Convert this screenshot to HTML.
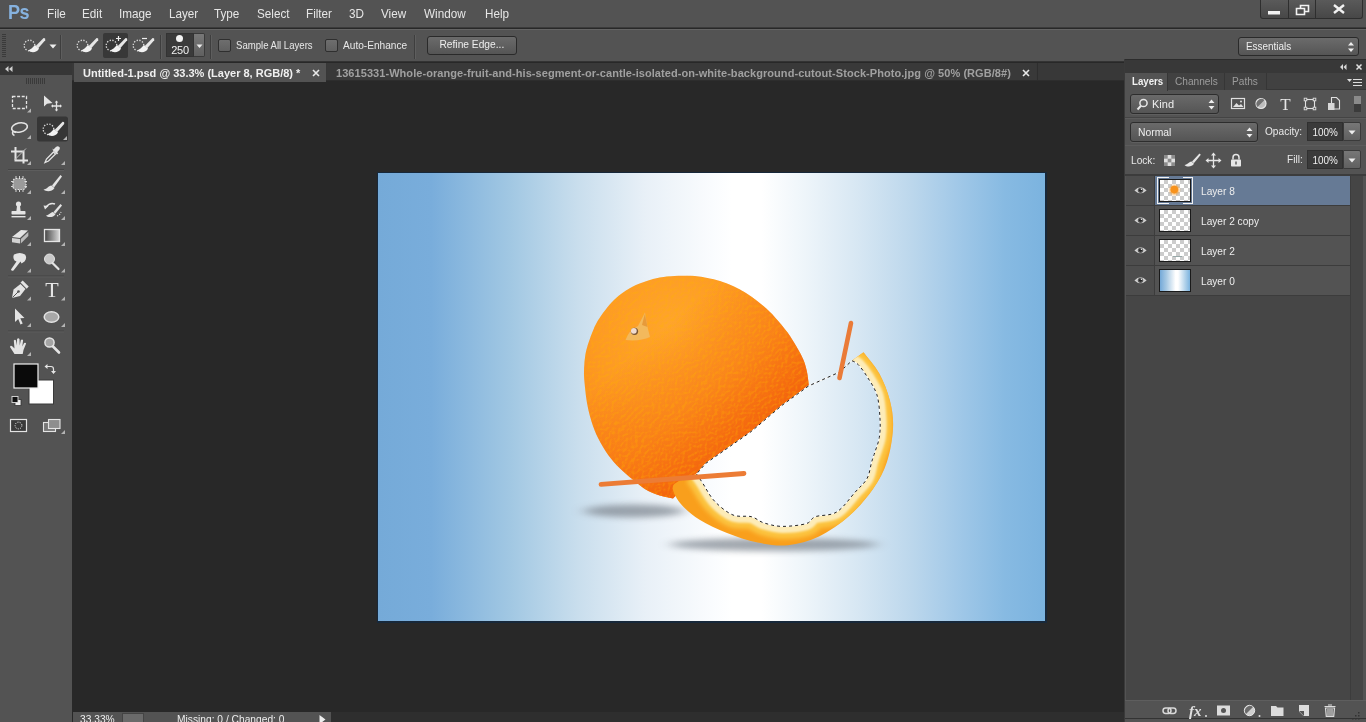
<!DOCTYPE html>
<html><head><meta charset="utf-8">
<style>
*{box-sizing:border-box;margin:0;padding:0}
html,body{width:1366px;height:722px;overflow:hidden;background:#282828;font-family:"Liberation Sans",sans-serif;color:#e0e0e0;font-size:12px}
.abs{position:absolute}
#menubar{left:0;top:0;width:1366px;height:28px;background:#535353;border-bottom:1px solid #3b3b3b}
#menubar .mi{position:absolute;top:6px;font-size:13px;color:#e6e6e6;transform:scaleX(0.9);transform-origin:0 0;white-space:nowrap}
#ps{position:absolute;left:8px;top:0px;font-size:21px;font-weight:bold;color:#86b2df;letter-spacing:-0.5px;transform:scaleX(0.86);transform-origin:0 0}
#opts{left:0;top:29px;width:1366px;height:33px;background:#535353;border-top:1px solid #646464;border-bottom:1px solid #333}
#tabbar{left:72px;top:63px;width:1052px;height:18px;background:#383838;border-bottom:1px solid #2d2d2d}
.tab{position:absolute;top:0;height:19px;font-size:11px;font-weight:bold;line-height:21px;white-space:nowrap;overflow:hidden}
#tools{left:0;top:63px;width:72px;height:659px;background:#535353}
#canvas{left:73px;top:82px;width:1052px;height:630px;background:#282828}
#status{left:73px;top:712px;width:258px;height:10px;background:#535353}

#winctl{left:1260px;top:0;width:103px;height:19px;border:1px solid #2e2e2e;border-top:none;background:linear-gradient(#5a5a5a,#474747);border-radius:0 0 3px 3px}
#winctl i{position:absolute;top:0;width:1px;height:18px;background:#2e2e2e}
.sep{position:absolute;top:5px;width:2px;height:24px;border-left:1px solid #3e3e3e;border-right:1px solid #5e5e5e}
.cb{position:absolute;top:9px;width:13px;height:13px;background:linear-gradient(#6e6e6e,#606060);border:1px solid #2f2f2f;border-radius:2px}
.ot{position:absolute;top:9px;font-size:11px;color:#e8e8e8;white-space:nowrap;transform:scaleX(0.92);transform-origin:0 0}
.btn{position:absolute;border:1px solid #2a2a2a;border-radius:3px;background:linear-gradient(#6b6b6b,#555);font-size:11px;color:#eee;text-align:center}

#rpanel{left:1124px;top:59px;width:242px;height:663px;background:#535353;border-left:1px solid #3a3a3a}
#rpanel .hd{position:absolute;left:0;top:0;width:241px;height:14px;background:#383838;border-top:1px solid #2c2c2c}
.ptab{position:absolute;top:14px;height:17px;font-size:11px;line-height:16px;padding-left:7px;color:#9c9c9c;background:#414141;border-right:1px solid #363636;white-space:nowrap}
.ptab span,.lt span,.pl span{display:inline-block;transform:scaleX(0.92);transform-origin:0 50%}
.dd{position:absolute;height:20px;border:1px solid #2d2d2d;border-radius:3px;background:linear-gradient(#6a6a6a,#555);font-size:11px;line-height:18px;color:#eee;box-shadow:0 1px 0 #5f5f5f}
.pl{position:absolute;font-size:11px;color:#e8e8e8;white-space:nowrap}
.fld{position:absolute;width:36px;height:19px;background:#3a3a3a;border:1px solid #303030;font-size:11px;line-height:18px;text-align:center;color:#f0f0f0}
.fbtn{position:absolute;width:18px;height:19px;background:linear-gradient(#777,#606060);border:1px solid #3a3a3a;border-radius:0 2px 2px 0}
.lrow{position:absolute;left:1px;width:224px;height:30px;border-bottom:1px solid #3c3c3c;background:#535353}
.lrow .eye{position:absolute;left:0;top:0;width:29px;height:29px;background:#4d4d4d;border-right:1px solid #3c3c3c}
.lrow .th{position:absolute;left:33px;top:3px;width:32px;height:23px;border:1px solid #1a1a1a}
.lt{position:absolute;left:75px;top:9px;font-size:11px;color:#eee;white-space:nowrap}
.chk{background-color:#fff;background-image:linear-gradient(45deg,#ccc 25%,transparent 25%,transparent 75%,#ccc 75%),linear-gradient(45deg,#ccc 25%,transparent 25%,transparent 75%,#ccc 75%);background-size:8px 8px;background-position:0 0,4px 4px}
</style></head><body><div id="wrap" style="position:absolute;left:0;top:0;width:1366px;height:722px;will-change:transform">
<svg width="0" height="0" style="position:absolute"><defs>
<g id="qs"><circle cx="7.5" cy="10.5" r="5.3" fill="none" stroke="#dcdcdc" stroke-width="1.3" stroke-dasharray="1.3 1.5"/><path d="M21.6,3 L13.8,11 L16.2,13.3 L23.2,5.2 Q23.8,2.8 21.6,3 Z" fill="#e6e6e6"/><path d="M13.6,10.6 C10.600,11.200 10.400,14.300 6.200,15.200 C9,18.200 15,17.800 17,13.400 Z" fill="#f2f2f2"/></g>
</defs></svg>
<div id="menubar" class="abs">
 <div id="ps">Ps</div>
 <div class="mi" style="left:47px">File</div>
 <div class="mi" style="left:82px">Edit</div>
 <div class="mi" style="left:119px">Image</div>
 <div class="mi" style="left:169px">Layer</div>
 <div class="mi" style="left:214px">Type</div>
 <div class="mi" style="left:257px">Select</div>
 <div class="mi" style="left:306px">Filter</div>
 <div class="mi" style="left:349px">3D</div>
 <div class="mi" style="left:381px">View</div>
 <div class="mi" style="left:424px">Window</div>
 <div class="mi" style="left:485px">Help</div>
</div>
<div id="winctl" class="abs"><i style="left:27px"></i><i style="left:54px"></i>
<svg class="abs" style="left:0;top:0" width="103" height="18"><rect x="7" y="11" width="12" height="3.5" fill="#f2f2f2"/><path d="M39.5,5.5 h8 v6 h-8 z" fill="none" stroke="#f2f2f2" stroke-width="1.6"/><path d="M35.5,8.5 h8 v6 h-8 z" fill="#4d4d4d" stroke="#f2f2f2" stroke-width="1.6"/><path d="M73,5 L83,13 M83,5 L73,13" stroke="#f2f2f2" stroke-width="2.4"/></svg></div>
<div id="opts" class="abs">
 <svg class="abs" style="left:2px;top:4px" width="5" height="24"><g fill="#3a3a3a"><rect x="0" y="0" width="4" height="1"/><rect x="0" y="2" width="4" height="1"/><rect x="0" y="4" width="4" height="1"/><rect x="0" y="6" width="4" height="1"/><rect x="0" y="8" width="4" height="1"/><rect x="0" y="10" width="4" height="1"/><rect x="0" y="12" width="4" height="1"/><rect x="0" y="14" width="4" height="1"/><rect x="0" y="16" width="4" height="1"/><rect x="0" y="18" width="4" height="1"/><rect x="0" y="20" width="4" height="1"/><rect x="0" y="22" width="4" height="1"/></g></svg>
 <svg class="abs" style="left:22px;top:5px" width="24" height="22" viewBox="0 0 24 22"><use href="#qs"/></svg>
 <svg class="abs" style="left:49px;top:14px" width="8" height="5"><path d="M0.5,0.5 L7.5,0.5 L4,4.5 Z" fill="#eee"/></svg>
 <div class="sep" style="left:60px"></div>
 <svg class="abs" style="left:75px;top:5px" width="24" height="22" viewBox="0 0 24 22"><use href="#qs"/></svg>
 <div class="abs" style="left:103px;top:3px;width:25px;height:25px;background:#383838;border-radius:2px"></div>
 <svg class="abs" style="left:104px;top:5px" width="24" height="22" viewBox="0 0 24 22"><use href="#qs"/><path d="M12,3.5 h5 M14.5,1 v5" stroke="#eee" stroke-width="1.2"/></svg>
 <svg class="abs" style="left:131px;top:5px" width="24" height="22" viewBox="0 0 24 22"><use href="#qs"/><path d="M11,3.5 h5" stroke="#eee" stroke-width="1.2"/></svg>
 <div class="sep" style="left:160px"></div>
 <div class="abs" style="left:166px;top:3px;width:28px;height:24px;background:#3a3a3a;border:1px solid #333"></div>
 <div class="abs" style="left:176px;top:5px;width:7px;height:7px;border-radius:50%;background:#f4f4f4"></div>
 <div class="abs" style="left:166px;top:14px;width:28px;text-align:center;font-size:11px;color:#f0f0f0;letter-spacing:-0.3px">250</div>
 <div class="abs" style="left:194px;top:3px;width:11px;height:24px;background:linear-gradient(#787878,#606060);border:1px solid #3a3a3a;border-left:none;border-radius:0 2px 2px 0"></div>
 <svg class="abs" style="left:196px;top:14px" width="8" height="5"><path d="M0.5,0.5 L6.5,0.5 L3.5,4 Z" fill="#eee"/></svg>
 <div class="sep" style="left:210px"></div>
 <div class="cb" style="left:218px"></div>
 <div class="ot" style="left:236px;transform:scaleX(0.87)">Sample All Layers</div>
 <div class="cb" style="left:325px"></div>
 <div class="ot" style="left:343px">Auto-Enhance</div>
 <div class="sep" style="left:414px"></div>
 <div class="btn" style="left:427px;top:6px;width:90px;height:19px;line-height:15px;"><span style="display:inline-block;transform:scaleX(0.93)">Refine Edge...</span></div>
 <div class="btn" style="left:1238px;top:7px;width:121px;height:19px;line-height:16px;text-align:left;padding-left:7px;"><span style="display:inline-block;transform:scaleX(0.9);transform-origin:0 50%">Essentials</span></div>
 <svg class="abs" style="left:1347px;top:11px" width="8" height="12"><path d="M1,4.5 L7,4.5 L4,1 Z M1,7.5 L7,7.5 L4,11 Z" fill="#eee"/></svg>
</div>
<div id="tabbar" class="abs">
 <div class="tab" style="left:2px;width:252px;background:#535353;color:#f0f0f0;padding-left:9px">Untitled-1.psd @ 33.3% (Layer 8, RGB/8) *</div>
 <div class="tab" style="left:255px;width:709px;height:17px;background:#393939;color:#a0a0a0;padding-left:9px;letter-spacing:0.06px">13615331-Whole-orange-fruit-and-his-segment-or-cantle-isolated-on-white-background-cutout-Stock-Photo.jpg @ 50% (RGB/8#)</div>
 <svg class="abs" style="left:240px;top:6px" width="8" height="8"><path d="M1,1 L7,7 M7,1 L1,7" stroke="#e8e8e8" stroke-width="1.6"/></svg>
 <svg class="abs" style="left:950px;top:6px" width="8" height="8"><path d="M1,1 L7,7 M7,1 L1,7" stroke="#e8e8e8" stroke-width="1.6"/></svg>
 <div class="abs" style="left:965px;top:0;width:1px;height:17px;background:#2e2e2e"></div>
</div>
<div id="tools" class="abs"></div>
<!--TOOLS--><svg class="abs" id="toolsvg" style="left:0;top:0" width="73" height="722" viewBox="0 0 73 722"><defs><linearGradient id="tg" x1="0" x2="1" y1="0" y2="0"><stop offset="0" stop-color="#444"/><stop offset="1" stop-color="#d8d8d8"/></linearGradient></defs><rect x="0" y="63" width="72" height="12" fill="#363636"/><path d="M8.5,66 L5,69 L8.5,72 Z M12.5,66 L9,69 L12.5,72 Z" fill="#d0d0d0"/><rect x="26" y="78" width="1" height="6" fill="#3a3a3a"/><rect x="28" y="78" width="1" height="6" fill="#3a3a3a"/><rect x="30" y="78" width="1" height="6" fill="#3a3a3a"/><rect x="32" y="78" width="1" height="6" fill="#3a3a3a"/><rect x="34" y="78" width="1" height="6" fill="#3a3a3a"/><rect x="36" y="78" width="1" height="6" fill="#3a3a3a"/><rect x="38" y="78" width="1" height="6" fill="#3a3a3a"/><rect x="40" y="78" width="1" height="6" fill="#3a3a3a"/><rect x="42" y="78" width="1" height="6" fill="#3a3a3a"/><rect x="44" y="78" width="1" height="6" fill="#3a3a3a"/><rect x="8" y="169.0" width="56" height="1" fill="#444"/><rect x="8" y="170.0" width="56" height="1" fill="#5d5d5d"/><rect x="8" y="275.5" width="56" height="1" fill="#444"/><rect x="8" y="276.5" width="56" height="1" fill="#5d5d5d"/><rect x="8" y="330.5" width="56" height="1" fill="#444"/><rect x="8" y="331.5" width="56" height="1" fill="#5d5d5d"/><rect x="12.5" y="96.5" width="14" height="12" fill="none" stroke="#e4e4e4" stroke-width="1.3" stroke-dasharray="3 1.6"/><path d="M31,108.5 L31,112.5 L27,112.5 Z" fill="#b4b4b4"/><path d="M44,95.5 L44,106.5 L47,103.7 L52.5,103.0 Z" fill="#e4e4e4"/><path d="M52.5,106.0 h8 M56.5,102.0 v8" stroke="#e4e4e4" stroke-width="1.3"/><path d="M56.5,100.5 l-1.8,2 h3.6 z M56.5,111.5 l-1.8,-2 h3.6 z M51,106.0 l2,-1.8 v3.6 z M62,106.0 l-2,-1.8 v3.6 z" fill="#e4e4e4"/><ellipse cx="19.5" cy="127.5" rx="8" ry="4.6" fill="none" stroke="#e4e4e4" stroke-width="1.6" transform="rotate(-12 19.5 127.5)"/><path d="M13,131 q-1.5,3 1.5,4.5 M13.5,131.5 l2.5,1" stroke="#e4e4e4" stroke-width="1.4" fill="none"/><path d="M31,135 L31,139 L27,139 Z" fill="#b4b4b4"/><rect x="37" y="116.5" width="31" height="25" rx="2.5" fill="#363636"/><g transform="translate(41,118.800)"><use href="#qs"/></g><path d="M67,136 L67,140 L63,140 Z" fill="#b4b4b4"/><path d="M15.5,147 v13.5 h12.5 M11,151.5 h12.5 v12" fill="none" stroke="#e4e4e4" stroke-width="2"/><path d="M14.5,160 L26,148.5" stroke="#bdbdbd" stroke-width="1"/><path d="M31,161 L31,165 L27,165 Z" fill="#b4b4b4"/><path d="M45,162.5 l1.5,-3.5 l7,-7 l2,2 l-7,7 z" fill="none" stroke="#e4e4e4" stroke-width="1.3"/><path d="M53,150.5 l4,4 l1.2,-1.2 l-1,-1 l2.3,-2.8 q1,-2.5 -1,-3 q-1,-0.6 -2.6,0.6 l-2.4,2.4 l-1,-1 z" fill="#e4e4e4"/><path d="M65,161 L65,165 L61,165 Z" fill="#b4b4b4"/><rect x="13" y="178.5" width="13" height="11" rx="3" fill="#9a9a9a" stroke="#e4e4e4" stroke-width="1.2" stroke-dasharray="1.4 1.4"/><path d="M11,181.5 h17 M11,186.5 h17 M16,176 v16 M19.5,176 v16 M23,176 v16" stroke="#e4e4e4" stroke-width="0.9" stroke-dasharray="2.5 11 2.5 20"/><path d="M31,190 L31,194 L27,194 Z" fill="#b4b4b4"/><path d="M60.5,175 L52,185.5 L54,187.5 L62,176.5 Z" fill="#e4e4e4"/><path d="M51.5,185.5 C48,186 47.5,189 43.5,189.5 C46,192 52,192 54.5,188 Z" fill="#e4e4e4"/><path d="M65,190 L65,194 L61,194 Z" fill="#b4b4b4"/><circle cx="18.5" cy="204" r="2.6" fill="#e4e4e4"/><path d="M17,206 h3 l0.6,5 h-4.2 z" fill="#e4e4e4"/><rect x="11.5" y="211" width="14" height="3.6" rx="0.8" fill="#e4e4e4"/><rect x="11.5" y="216" width="14" height="1.4" fill="#e4e4e4"/><path d="M31,216 L31,220 L27,220 Z" fill="#b4b4b4"/><path d="M60.5,204 L53.5,212 L55.3,213.8 L62,205.5 Z" fill="#e4e4e4"/><path d="M53,212 C50,212.5 49.5,215 46,215.5 C48,218 53.5,217.5 55.5,214.2 Z" fill="#e4e4e4"/><path d="M46,207 q4,-5 9,-3" fill="none" stroke="#e4e4e4" stroke-width="1.5"/><path d="M43.5,205.5 l5,0.5 l-3.5,3.5 z" fill="#e4e4e4"/><path d="M57,216 q3,-1 4,-4" stroke="#e4e4e4" stroke-width="1.2" stroke-dasharray="1.2 1.2" fill="none"/><path d="M65,216 L65,220 L61,220 Z" fill="#b4b4b4"/><path d="M12,237 l9,-7 l7,0.5 l-8,7.5 z" fill="#e4e4e4"/><path d="M12,238 l8,1 v4.5 l-8,-1.3 z" fill="#d2d2d2"/><path d="M20.8,239 l7.5,-7 v4 l-7.5,7.5 z" fill="#bbb"/><path d="M31,242 L31,246 L27,246 Z" fill="#b4b4b4"/><rect x="44.5" y="229.5" width="15" height="12" fill="url(#tg)" stroke="#e4e4e4" stroke-width="1.3"/><path d="M65,242 L65,246 L61,246 Z" fill="#b4b4b4"/><path d="M14,254.5 q6,-3 11,0 q2.5,3 -0.5,7 l-3,2 l-1,-2 l-7,9 q-2,1 -2.5,-1 l5.5,-8 l-2,-1 q-2,-3 -0.5,-6 z" fill="#e4e4e4"/><path d="M31,268.5 L31,272.5 L27,272.5 Z" fill="#b4b4b4"/><circle cx="49.5" cy="259.0" r="5" fill="#c9c9c9" stroke="#e4e4e4" stroke-width="1"/><path d="M52.5,263.0 l6,6" stroke="#e4e4e4" stroke-width="2.2" stroke-linecap="round"/><path d="M65,268.5 L65,272.5 L61,272.5 Z" fill="#b4b4b4"/><path d="M12,298.0 l1.5,-8.5 l7,-5.5 l5,5 l-5.5,7 z" fill="#e4e4e4"/><path d="M20.5,282.5 l2.2,-2 l6,6 l-2,2.2 z" fill="#e4e4e4"/><path d="M12.5,297.5 l5.5,-5.5" stroke="#555" stroke-width="1"/><circle cx="18.5" cy="291.5" r="1.3" fill="#555"/><path d="M31,296.5 L31,300.5 L27,300.5 Z" fill="#b4b4b4"/><text x="52" y="297.0" font-family="Liberation Serif" font-size="22" fill="#e4e4e4" text-anchor="middle">T</text><path d="M65,296.5 L65,300.5 L61,300.5 Z" fill="#b4b4b4"/><path d="M15,308.5 L15,322 L18.2,319 L20.5,324.5 L22.7,323.5 L20.3,318.2 L24.5,318 Z" fill="#e4e4e4"/><path d="M31,323 L31,327 L27,327 Z" fill="#b4b4b4"/><ellipse cx="51.5" cy="317" rx="7.3" ry="5.3" fill="#a8a8a8" stroke="#e4e4e4" stroke-width="1.5"/><path d="M65,323 L65,327 L61,327 Z" fill="#b4b4b4"/><path d="M14.5,354 l-4.5,-7 q0.5,-2 2.5,-0.5 l2,2 l-0.7,-8 q1.2,-1.5 2.2,0 l0.8,5 l0.3,-6.5 q1.2,-1.5 2.4,0 l0.2,6.5 l1.2,-5.5 q1.4,-1.2 2.2,0.3 l-0.8,6.2 l1.8,-3.5 q1.5,-0.8 2,0.6 l-2.6,6.5 l-0.8,4 z" fill="#e4e4e4"/><path d="M31,352 L31,356 L27,356 Z" fill="#b4b4b4"/><circle cx="49.5" cy="342.5" r="4.6" fill="#a5a5a5" stroke="#e4e4e4" stroke-width="1.5"/><path d="M53,346.5 l6,6" stroke="#e4e4e4" stroke-width="2.6" stroke-linecap="round"/><rect x="29" y="380" width="24.5" height="24" fill="#fff" stroke="#3a3a3a" stroke-width="1"/><rect x="14" y="364" width="24" height="24" fill="#0a0a0a" stroke="#f0f0f0" stroke-width="1.2"/><path d="M47,366.5 h4 q2.5,0 2.5,2.5 v3" fill="none" stroke="#e4e4e4" stroke-width="1.2"/><path d="M44.5,366.5 l3,-2.5 v5 z M53.5,374 l-2.5,-3 h5 z" fill="#e4e4e4"/><rect x="15" y="399.5" width="6" height="6" fill="#eee" stroke="#333" stroke-width="0.8"/><rect x="12" y="396.5" width="6" height="6" fill="#111" stroke="#ddd" stroke-width="0.9"/><rect x="10.5" y="419.5" width="16" height="12" fill="#3a3a3a" stroke="#e4e4e4" stroke-width="1.2"/><circle cx="18.5" cy="425.5" r="3.4" fill="none" stroke="#e4e4e4" stroke-width="1" stroke-dasharray="1.2 1.2"/><rect x="43.5" y="422.5" width="12" height="9" fill="#777" stroke="#e4e4e4" stroke-width="1.1"/><rect x="48.5" y="419.5" width="11.500" height="9" fill="#8e8e8e" stroke="#e4e4e4" stroke-width="1.1"/><path d="M65,430 L65,434 L61,434 Z" fill="#b4b4b4"/></svg><!--/TOOLS-->
<div id="canvas" class="abs"></div>
<!--ART--><svg class="abs" id="art" style="left:0;top:0" width="1366" height="722" viewBox="0 0 1366 722">
<defs>
<linearGradient id="bg" gradientUnits="userSpaceOnUse" x1="378" y1="0" x2="1045" y2="0">
<stop offset="0" stop-color="#75aad8"/><stop offset="0.08" stop-color="#79addb"/><stop offset="0.2" stop-color="#a2c8e3"/><stop offset="0.3" stop-color="#c9deed"/><stop offset="0.4" stop-color="#e8f0f7"/><stop offset="0.5" stop-color="#fafcfe"/><stop offset="0.53" stop-color="#ffffff"/><stop offset="0.575" stop-color="#ffffff"/><stop offset="0.64" stop-color="#eef5fa"/><stop offset="0.72" stop-color="#d7e7f3"/><stop offset="0.8" stop-color="#bcd7ec"/><stop offset="0.88" stop-color="#9dc6e7"/><stop offset="0.94" stop-color="#87bae2"/><stop offset="1" stop-color="#7bb3df"/>
</linearGradient>
<radialGradient id="og" gradientUnits="userSpaceOnUse" cx="675" cy="330" r="175">
<stop offset="0" stop-color="#ffa62c"/><stop offset="0.45" stop-color="#fd9a24"/><stop offset="0.8" stop-color="#fb8a1c"/><stop offset="1" stop-color="#f67814"/>
</radialGradient>
<linearGradient id="og2" gradientUnits="userSpaceOnUse" x1="655" y1="335" x2="765" y2="460">
<stop offset="0" stop-color="#f0560a" stop-opacity="0"/><stop offset="0.45" stop-color="#f4640c" stop-opacity="0.38"/><stop offset="0.75" stop-color="#f25c0a" stop-opacity="0.7"/><stop offset="1" stop-color="#ee5408" stop-opacity="0.92"/>
</linearGradient>
<filter id="b6" x="-20%" y="-100%" width="140%" height="300%"><feGaussianBlur stdDeviation="7 3"/></filter>
<filter id="b05"><feGaussianBlur stdDeviation="0.6"/></filter><filter id="b2"><feGaussianBlur stdDeviation="2"/></filter><filter id="b1"><feGaussianBlur stdDeviation="1.2"/></filter>
<filter id="tex" x="0" y="0" width="100%" height="100%"><feTurbulence type="fractalNoise" baseFrequency="0.3" numOctaves="2" seed="7" result="n"/><feDiffuseLighting in="n" surfaceScale="1.6" diffuseConstant="1" lighting-color="#fff" result="l"><feDistantLight azimuth="225" elevation="55"/></feDiffuseLighting><feColorMatrix in="l" type="matrix" values="0 0 0 0 1  0 0 0 0 0.45  0 0 0 0 0  -3.2 0 0 0 2.75" result="d"/><feComposite in="d" in2="SourceGraphic" operator="in"/></filter>
<clipPath id="peelclip"><path d="M863.5,352.2 C866.1,355.8 874.9,365.4 879.3,373.5 C883.7,381.6 887.7,391.9 890.0,401.0 C892.3,410.1 893.5,418.2 893.0,428.3 C892.5,438.4 890.3,451.7 887.0,461.8 C883.7,471.9 879.3,480.0 873.0,489.0 C866.7,498.0 858.3,507.9 849.3,515.8 C840.3,523.7 829.2,531.6 819.0,536.5 C808.8,541.4 798.2,544.2 788.0,545.2 C777.8,546.2 767.7,544.6 757.5,542.6 C747.3,540.6 736.6,536.8 727.0,533.0 C717.4,529.2 707.2,524.5 699.6,519.7 C692.0,515.0 685.8,509.6 681.3,504.5 C676.8,499.4 673.3,492.8 672.8,489.0 C672.2,485.2 674.0,484.1 678.0,481.6 C682.0,479.1 693.4,475.3 696.5,474.0 L705.7,463.4 L751.4,431.4 L781.8,405.5 L808.5,386 L839.7,372 L851.9,360.7 Z"/></clipPath>
</defs>
<rect x="377" y="172" width="670" height="451" fill="#17283a"/>
<rect x="378" y="173" width="667" height="448" fill="url(#bg)"/>
<ellipse cx="634" cy="511" rx="50" ry="6.500" fill="#7d858f" opacity="0.72" filter="url(#b6)"/>
<ellipse cx="774" cy="544.500" rx="104" ry="6.500" fill="#7d858f" opacity="0.72" filter="url(#b6)"/>
<path d="M808.8,385.0 C808.5,382.8 807.9,376.2 807.0,372.0 C806.1,367.8 805.0,363.7 803.5,360.0 C802.0,356.3 800.5,353.7 798.3,349.7 C796.0,345.7 792.9,340.3 790.0,336.0 C787.1,331.7 784.1,328.0 780.8,324.0 C777.5,320.0 773.7,315.7 770.0,312.0 C766.3,308.3 762.5,305.2 758.5,302.0 C754.5,298.8 750.2,295.7 746.0,293.0 C741.8,290.3 737.3,288.0 733.0,286.0 C728.7,284.0 724.2,282.3 720.0,281.0 C715.8,279.7 711.7,278.8 707.5,278.0 C703.3,277.2 699.2,276.4 695.0,276.0 C690.8,275.6 686.7,275.6 682.0,275.7 C677.3,275.8 671.8,275.9 667.0,276.5 C662.2,277.1 657.3,277.9 653.0,279.0 C648.7,280.1 644.7,281.6 641.0,283.0 C637.3,284.4 634.3,285.7 631.0,287.5 C627.7,289.3 624.2,291.6 621.0,294.0 C617.8,296.4 615.0,298.8 612.0,302.0 C609.0,305.2 605.7,309.3 603.0,313.0 C600.3,316.7 598.1,320.0 596.0,324.0 C593.9,328.0 592.1,332.7 590.5,337.0 C588.9,341.3 587.4,345.5 586.4,349.7 C585.4,353.9 584.9,357.8 584.5,362.0 C584.1,366.2 583.9,370.3 584.0,375.0 C584.1,379.7 584.8,385.2 585.3,390.0 C585.8,394.8 586.2,398.7 587.2,404.0 C588.2,409.3 589.8,416.0 591.6,421.7 C593.4,427.4 595.4,432.8 598.2,438.3 C601.0,443.8 604.6,449.9 608.2,454.9 C611.8,459.9 615.6,464.0 619.8,468.2 C623.9,472.4 628.9,476.4 633.1,479.8 C637.3,483.2 640.4,486.3 644.8,488.9 C649.2,491.5 655.0,494.0 659.7,495.6 C664.4,497.2 670.8,498.0 673.0,498.5 L696.5,474 L705.7,463.4 L751.4,431.4 L781.8,405.5 Z" fill="url(#og)"/>
<path d="M808.8,385.0 C808.5,382.8 807.9,376.2 807.0,372.0 C806.1,367.8 805.0,363.7 803.5,360.0 C802.0,356.3 800.5,353.7 798.3,349.7 C796.0,345.7 792.9,340.3 790.0,336.0 C787.1,331.7 784.1,328.0 780.8,324.0 C777.5,320.0 773.7,315.7 770.0,312.0 C766.3,308.3 762.5,305.2 758.5,302.0 C754.5,298.8 750.2,295.7 746.0,293.0 C741.8,290.3 737.3,288.0 733.0,286.0 C728.7,284.0 724.2,282.3 720.0,281.0 C715.8,279.7 711.7,278.8 707.5,278.0 C703.3,277.2 699.2,276.4 695.0,276.0 C690.8,275.6 686.7,275.6 682.0,275.7 C677.3,275.8 671.8,275.9 667.0,276.5 C662.2,277.1 657.3,277.9 653.0,279.0 C648.7,280.1 644.7,281.6 641.0,283.0 C637.3,284.4 634.3,285.7 631.0,287.5 C627.7,289.3 624.2,291.6 621.0,294.0 C617.8,296.4 615.0,298.8 612.0,302.0 C609.0,305.2 605.7,309.3 603.0,313.0 C600.3,316.7 598.1,320.0 596.0,324.0 C593.9,328.0 592.1,332.7 590.5,337.0 C588.9,341.3 587.4,345.5 586.4,349.7 C585.4,353.9 584.9,357.8 584.5,362.0 C584.1,366.2 583.9,370.3 584.0,375.0 C584.1,379.7 584.8,385.2 585.3,390.0 C585.8,394.8 586.2,398.7 587.2,404.0 C588.2,409.3 589.8,416.0 591.6,421.7 C593.4,427.4 595.4,432.8 598.2,438.3 C601.0,443.8 604.6,449.9 608.2,454.9 C611.8,459.9 615.6,464.0 619.8,468.2 C623.9,472.4 628.9,476.4 633.1,479.8 C637.3,483.2 640.4,486.3 644.8,488.9 C649.2,491.5 655.0,494.0 659.7,495.6 C664.4,497.2 670.8,498.0 673.0,498.5 L696.5,474 L705.7,463.4 L751.4,431.4 L781.8,405.5 Z" fill="url(#og2)"/>
<path d="M808.8,385.0 C808.5,382.8 807.9,376.2 807.0,372.0 C806.1,367.8 805.0,363.7 803.5,360.0 C802.0,356.3 800.5,353.7 798.3,349.7 C796.0,345.7 792.9,340.3 790.0,336.0 C787.1,331.7 784.1,328.0 780.8,324.0 C777.5,320.0 773.7,315.7 770.0,312.0 C766.3,308.3 762.5,305.2 758.5,302.0 C754.5,298.8 750.2,295.7 746.0,293.0 C741.8,290.3 737.3,288.0 733.0,286.0 C728.7,284.0 724.2,282.3 720.0,281.0 C715.8,279.7 711.7,278.8 707.5,278.0 C703.3,277.2 699.2,276.4 695.0,276.0 C690.8,275.6 686.7,275.6 682.0,275.7 C677.3,275.8 671.8,275.9 667.0,276.5 C662.2,277.1 657.3,277.9 653.0,279.0 C648.7,280.1 644.7,281.6 641.0,283.0 C637.3,284.4 634.3,285.7 631.0,287.5 C627.7,289.3 624.2,291.6 621.0,294.0 C617.8,296.4 615.0,298.8 612.0,302.0 C609.0,305.2 605.7,309.3 603.0,313.0 C600.3,316.7 598.1,320.0 596.0,324.0 C593.9,328.0 592.1,332.7 590.5,337.0 C588.9,341.3 587.4,345.5 586.4,349.7 C585.4,353.9 584.9,357.8 584.5,362.0 C584.1,366.2 583.9,370.3 584.0,375.0 C584.1,379.7 584.8,385.2 585.3,390.0 C585.8,394.8 586.2,398.7 587.2,404.0 C588.2,409.3 589.8,416.0 591.6,421.7 C593.4,427.4 595.4,432.8 598.2,438.3 C601.0,443.8 604.6,449.9 608.2,454.9 C611.8,459.9 615.6,464.0 619.8,468.2 C623.9,472.4 628.9,476.4 633.1,479.8 C637.3,483.2 640.4,486.3 644.8,488.9 C649.2,491.5 655.0,494.0 659.7,495.6 C664.4,497.2 670.8,498.0 673.0,498.5 L696.5,474 L705.7,463.4 L751.4,431.4 L781.8,405.5 Z" fill="#fff" filter="url(#tex)" opacity="0.3"/>
<path d="M645,312.500 Q646,322 650,337 Q640,341.500 625.500,340 Q629,330 638,326 Z" fill="#f3b95c" filter="url(#b05)"/><path d="M644.800,314 L647.500,327 L642,325 Z" fill="#e79a3a"/><circle cx="634.500" cy="331.300" r="3.600" fill="#7a5634"/><circle cx="633.800" cy="330.800" r="2.900" fill="#f1dccf"/>
<path d="M863.5,352.2 C866.1,355.8 874.9,365.4 879.3,373.5 C883.7,381.6 887.7,391.9 890.0,401.0 C892.3,410.1 893.5,418.2 893.0,428.3 C892.5,438.4 890.3,451.7 887.0,461.8 C883.7,471.9 879.3,480.0 873.0,489.0 C866.7,498.0 858.3,507.9 849.3,515.8 C840.3,523.7 829.2,531.6 819.0,536.5 C808.8,541.4 798.2,544.2 788.0,545.2 C777.8,546.2 767.7,544.6 757.5,542.6 C747.3,540.6 736.6,536.8 727.0,533.0 C717.4,529.2 707.2,524.5 699.6,519.7 C692.0,515.0 685.8,509.6 681.3,504.5 C676.8,499.4 673.3,492.8 672.8,489.0 C672.2,485.2 674.0,484.1 678.0,481.6 C682.0,479.1 693.4,475.3 696.5,474.0 L705.7,463.4 L751.4,431.4 L781.8,405.5 L808.5,386 L839.7,372 L851.9,360.7 Z" fill="#f99f1c"/>
<g clip-path="url(#peelclip)"><path d="M696.5,474.0 C697.5,475.5 699.6,478.4 702.6,483.0 C705.6,487.6 709.7,496.1 714.8,501.4 C719.9,506.7 726.9,512.5 733.0,515.0 C739.1,517.5 746.3,515.4 751.4,516.7 C756.5,518.0 758.5,521.2 763.6,522.8 C768.7,524.4 774.7,526.2 781.8,526.4 C788.9,526.5 800.4,525.3 806.0,523.7 C811.6,522.1 810.2,518.7 815.3,516.7 C820.4,514.8 830.1,516.1 836.7,512.0 C843.3,507.9 850.0,497.9 855.0,492.3 C860.0,486.7 864.2,483.7 867.0,478.6 C869.8,473.5 870.4,466.1 871.7,461.8 C873.0,457.5 873.4,456.8 874.7,452.7 C876.0,448.6 878.4,443.1 879.3,437.5 C880.2,431.9 880.4,426.1 880.0,419.0 C879.6,411.9 879.1,401.9 876.9,394.8 C874.7,387.7 870.1,381.6 867.0,376.5 C863.9,371.4 860.5,367.0 858.0,364.4 C855.5,361.8 852.9,361.3 851.9,360.7" fill="none" stroke="#fcc440" stroke-width="25" filter="url(#b2)"/><path d="M696.5,474.0 C697.5,475.5 699.6,478.4 702.6,483.0 C705.6,487.6 709.7,496.1 714.8,501.4 C719.9,506.7 726.9,512.5 733.0,515.0 C739.1,517.5 746.3,515.4 751.4,516.7 C756.5,518.0 758.5,521.2 763.6,522.8 C768.7,524.4 774.7,526.2 781.8,526.4 C788.9,526.5 800.4,525.3 806.0,523.7 C811.6,522.1 810.2,518.7 815.3,516.7 C820.4,514.8 830.1,516.1 836.7,512.0 C843.3,507.9 850.0,497.9 855.0,492.3 C860.0,486.7 864.2,483.7 867.0,478.6 C869.8,473.5 870.4,466.1 871.7,461.8 C873.0,457.5 873.4,456.8 874.7,452.7 C876.0,448.6 878.4,443.1 879.3,437.5 C880.2,431.9 880.4,426.1 880.0,419.0 C879.6,411.9 879.1,401.9 876.9,394.8 C874.7,387.7 870.1,381.6 867.0,376.5 C863.9,371.4 860.5,367.0 858.0,364.4 C855.5,361.8 852.9,361.3 851.9,360.7" fill="none" stroke="#fdecb8" stroke-width="13" filter="url(#b1)"/></g>
<path d="M696.5,474.0 C697.5,475.5 699.6,478.4 702.6,483.0 C705.6,487.6 709.7,496.1 714.8,501.4 C719.9,506.7 726.9,512.5 733.0,515.0 C739.1,517.5 746.3,515.4 751.4,516.7 C756.5,518.0 758.5,521.2 763.6,522.8 C768.7,524.4 774.7,526.2 781.8,526.4 C788.9,526.5 800.4,525.3 806.0,523.7 C811.6,522.1 810.2,518.7 815.3,516.7 C820.4,514.8 830.1,516.1 836.7,512.0 C843.3,507.9 850.0,497.9 855.0,492.3 C860.0,486.7 864.2,483.7 867.0,478.6 C869.8,473.5 870.4,466.1 871.7,461.8 C873.0,457.5 873.4,456.8 874.7,452.7 C876.0,448.6 878.4,443.1 879.3,437.5 C880.2,431.9 880.4,426.1 880.0,419.0 C879.6,411.9 879.1,401.9 876.9,394.8 C874.7,387.7 870.1,381.6 867.0,376.5 C863.9,371.4 860.5,367.0 858.0,364.4 C855.5,361.8 852.9,361.3 851.9,360.7 L839.7,372 L808.5,386 L781.8,405.5 L751.4,431.4 L705.7,463.4 Z" fill="url(#bg)"/>
<path d="M696.5,474.0 C697.5,475.5 699.6,478.4 702.6,483.0 C705.6,487.6 709.7,496.1 714.8,501.4 C719.9,506.7 726.9,512.5 733.0,515.0 C739.1,517.5 746.3,515.4 751.4,516.7 C756.5,518.0 758.5,521.2 763.6,522.8 C768.7,524.4 774.7,526.2 781.8,526.4 C788.9,526.5 800.4,525.3 806.0,523.7 C811.6,522.1 810.2,518.7 815.3,516.7 C820.4,514.8 830.1,516.1 836.7,512.0 C843.3,507.9 850.0,497.9 855.0,492.3 C860.0,486.7 864.2,483.7 867.0,478.6 C869.8,473.5 870.4,466.1 871.7,461.8 C873.0,457.5 873.4,456.8 874.7,452.7 C876.0,448.6 878.4,443.1 879.3,437.5 C880.2,431.9 880.4,426.1 880.0,419.0 C879.6,411.9 879.1,401.9 876.9,394.8 C874.7,387.7 870.1,381.6 867.0,376.5 C863.9,371.4 860.5,367.0 858.0,364.4 C855.5,361.8 852.9,361.3 851.9,360.7 L839.7,372 L808.5,386 L781.8,405.5 L751.4,431.4 L705.7,463.4 Z" fill="none" stroke="#fff" stroke-width="1"/>
<path d="M696.5,474.0 C697.5,475.5 699.6,478.4 702.6,483.0 C705.6,487.6 709.7,496.1 714.8,501.4 C719.9,506.7 726.9,512.5 733.0,515.0 C739.1,517.5 746.3,515.4 751.4,516.7 C756.5,518.0 758.5,521.2 763.6,522.8 C768.7,524.4 774.7,526.2 781.8,526.4 C788.9,526.5 800.4,525.3 806.0,523.7 C811.6,522.1 810.2,518.7 815.3,516.7 C820.4,514.8 830.1,516.1 836.7,512.0 C843.3,507.9 850.0,497.9 855.0,492.3 C860.0,486.7 864.2,483.7 867.0,478.6 C869.8,473.5 870.4,466.1 871.7,461.8 C873.0,457.5 873.4,456.8 874.7,452.7 C876.0,448.6 878.4,443.1 879.3,437.5 C880.2,431.9 880.4,426.1 880.0,419.0 C879.6,411.9 879.1,401.9 876.9,394.8 C874.7,387.7 870.1,381.6 867.0,376.5 C863.9,371.4 860.5,367.0 858.0,364.4 C855.5,361.8 852.9,361.3 851.9,360.7 L839.7,372 L808.5,386 L781.8,405.5 L751.4,431.4 L705.7,463.4 Z" fill="none" stroke="#222" stroke-width="1" stroke-dasharray="3 3"/>
<path d="M851,323 L839.5,378" stroke="#ea7b38" stroke-width="4.600" stroke-linecap="round"/>
<path d="M601,484.300 L744,473.500" stroke="#ec7c35" stroke-width="4.800" stroke-linecap="round"/>
</svg><!--/ART-->
<div id="status" class="abs"><div class="abs" style="left:7px;top:1px;font-size:11px;line-height:13px;color:#eee;transform:scaleX(0.93);transform-origin:0 0">33.33%</div><div class="abs" style="left:49px;top:1px;width:22px;height:12px;background:#6a6a6a;border:1px solid #444"></div><div class="abs" style="left:104px;top:1px;font-size:11px;line-height:13px;color:#eee;white-space:nowrap;transform:scaleX(0.93);transform-origin:0 0">Missing: 0 / Changed: 0</div><svg class="abs" style="left:246px;top:3px" width="7" height="9"><path d="M0.5,0 L6.5,4.500 L0.5,9 Z" fill="#eee"/></svg></div>
<div class="abs" style="left:331px;top:712px;width:793px;height:10px;background:#2e2e2e"></div>
<div id="rpanel" class="abs">
<div class="hd"><svg style="position:absolute;left:213px;top:3px" width="26" height="8"><path d="M5,1 L2,4 L5,7 Z M8.500,1 L5.500,4 L8.500,7 Z" fill="#d8d8d8"/><path d="M18.500,1.500 L23.500,6.500 M23.500,1.500 L18.500,6.500" stroke="#e2e2e2" stroke-width="1.500"/></svg></div>
<div class="abs" style="left:0;top:14px;width:241px;height:17px;background:#414141;border-bottom:1px solid #363636"></div>
<div class="ptab" style="left:0;width:43px;background:#535353;color:#f2f2f2;font-weight:bold;height:18px"><span style="transform:scaleX(0.88)">Layers</span></div>
<div class="ptab" style="left:43px;width:57px"><span>Channels</span></div>
<div class="ptab" style="left:100px;width:42px"><span>Paths</span></div>
<svg class="abs" style="left:222px;top:19px" width="16" height="9"><path d="M0,1 h5 l-2.5,3 z" fill="#ddd"/><path d="M6,1.5 h9 M6,4.5 h9 M6,7.5 h9" stroke="#ddd" stroke-width="1.2"/></svg>
<div class="dd" style="left:5px;top:35px;width:89px"><svg style="position:absolute;left:5px;top:3px" width="13" height="13"><circle cx="7.5" cy="5" r="3.6" fill="none" stroke="#e8e8e8" stroke-width="1.5"/><path d="M5,7.8 L1.5,11.5" stroke="#e8e8e8" stroke-width="2"/></svg><span style="position:absolute;left:21px;top:0">Kind</span><svg style="position:absolute;left:77px;top:4px" width="7" height="11"><path d="M0.5,4 L6.5,4 L3.5,0.5 Z M0.5,7 L6.5,7 L3.5,10.5 Z" fill="#eee"/></svg></div>
<svg class="abs" style="left:103px;top:36px" width="138" height="20" viewBox="1227 95 138 20">
 <rect x="1230.5" y="98.5" width="13" height="10" fill="none" stroke="#e0e0e0" stroke-width="1.2"/><path d="M1232,107 l3.5,-4 l2.5,2.5 l2,-1.5 l2.5,3 z" fill="#e0e0e0"/><circle cx="1240" cy="101.5" r="1" fill="#e0e0e0"/>
 <circle cx="1260" cy="103.5" r="5" fill="#bdbdbd" stroke="#e6e6e6" stroke-width="1.2"/><path d="M1256.5,107 A5,5 0 0 1 1263.5,100 Z" fill="#707070"/>
 <text x="1284.5" y="109.500" font-family="Liberation Serif" font-size="17" fill="#e6e6e6" text-anchor="middle">T</text>
 <rect x="1304.500" y="99.500" width="9" height="9" fill="none" stroke="#e0e0e0" stroke-width="1.1"/><g fill="#535353" stroke="#e0e0e0" stroke-width="0.9"><rect x="1303.200" y="98.200" width="2.600" height="2.600"/><rect x="1312.200" y="98.200" width="2.600" height="2.600"/><rect x="1303.200" y="107.200" width="2.600" height="2.600"/><rect x="1312.200" y="107.200" width="2.600" height="2.600"/></g>
 <path d="M1330.500,97.500 h5 l3,3 v8.500 h-8 z" fill="#535353" stroke="#e0e0e0" stroke-width="1.1"/><rect x="1327" y="103" width="6.500" height="7" fill="#d8d8d8"/>
 <rect x="1353" y="96" width="7" height="8" fill="#8a8a8a"/><rect x="1353" y="104" width="7" height="8" fill="#3b3b3b"/>
</svg>
<div class="abs" style="left:0;top:58px;width:241px;height:2px;background:#444;border-bottom:1px solid #5c5c5c"></div>
<div class="dd" style="left:5px;top:63px;width:128px"><span style="position:absolute;left:7px;top:0;transform:scaleX(0.94);transform-origin:0 50%">Normal</span><svg style="position:absolute;left:115px;top:4px" width="7" height="11"><path d="M0.5,4 L6.5,4 L3.5,0.5 Z M0.5,7 L6.5,7 L3.5,10.5 Z" fill="#eee"/></svg></div>
<div class="pl" style="left:140px;top:66px"><span>Opacity:</span></div>
<div class="fld" style="left:182px;top:63px"><span style="display:inline-block;transform:scaleX(0.9)">100%</span></div><div class="fbtn" style="left:218px;top:63px"><svg style="position:absolute;left:4px;top:7px" width="9" height="5"><path d="M0.5,0.5 L7.5,0.5 L4,4.5 Z" fill="#eee"/></svg></div>
<div class="abs" style="left:0;top:86px;width:241px;height:1px;background:#444;border-bottom:1px solid #5c5c5c"></div>
<div class="pl" style="left:6px;top:95px"><span>Lock:</span></div>
<svg class="abs" style="left:36px;top:92px" width="90" height="18" viewBox="1161 151 90 18">
 <rect x="1164" y="155" width="11" height="11" fill="#e0e0e0"/><g fill="#8c8c8c"><rect x="1164" y="155" width="3.700" height="3.700"/><rect x="1171.300" y="155" width="3.700" height="3.700"/><rect x="1167.700" y="158.700" width="3.700" height="3.700"/><rect x="1164" y="162.300" width="3.700" height="3.700"/><rect x="1171.300" y="162.300" width="3.700" height="3.700"/></g>
 <path d="M1199.500,153.500 L1192,161.500 L1193.800,163.300 L1200.800,154.800 Z" fill="#e6e6e6"/><path d="M1191.500,161.500 C1188.500,162 1188,164.500 1184.500,165 C1187,167.500 1192,167 1194,163.800 Z" fill="#e6e6e6"/>
 <path d="M1207.500,160.500 h12 M1213.500,154.500 v12" stroke="#e6e6e6" stroke-width="1.3"/><path d="M1213.500,152.500 l-2.500,3 h5 z M1213.500,168.500 l-2.500,-3 h5 z M1205.500,160.500 l3,-2.500 v5 z M1221.500,160.500 l-3,-2.500 v5 z" fill="#e6e6e6"/>
 <rect x="1231" y="159.500" width="10" height="7" rx="0.800" fill="#e6e6e6"/><path d="M1233,159.500 v-2 a3,3 0 0 1 6,0 v2" fill="none" stroke="#e6e6e6" stroke-width="1.5"/><rect x="1235.300" y="161.500" width="1.400" height="3" fill="#555"/>
</svg>
<div class="pl" style="left:162px;top:94px"><span>Fill:</span></div>
<div class="fld" style="left:182px;top:91px"><span style="display:inline-block;transform:scaleX(0.9)">100%</span></div><div class="fbtn" style="left:218px;top:91px"><svg style="position:absolute;left:4px;top:7px" width="9" height="5"><path d="M0.5,0.5 L7.5,0.5 L4,4.5 Z" fill="#eee"/></svg></div>
<div class="abs" style="left:0;top:115px;width:241px;height:2px;background:#3c3c3c"></div>
<div class="abs" style="left:1px;top:117px;width:224px;height:524px;background:#464646"></div>
<div class="abs" style="left:225px;top:117px;width:13px;height:524px;background:#454545;border-left:1px solid #3c3c3c"></div>
<div class="lrow" style="top:117px;background:#667a95;"><div class="eye"><svg style="position:absolute;left:8px;top:9.500px" width="13" height="9" viewBox="0 0 16 11"><path d="M0.5,5.5 Q8,-2.5 15.5,5.5 Q8,12.5 0.5,5.5 Z" fill="#cfcfcf"/><circle cx="8" cy="5.3" r="3.3" fill="#555"/><circle cx="8" cy="5.3" r="1.7" fill="#222"/><circle cx="9.2" cy="4" r="1" fill="#eee"/></svg></div><div style="position:absolute;left:31px;top:1px;width:36px;height:27px;border:1px solid #f2f2f2"></div><div style="position:absolute;left:43px;top:1px;width:14px;height:1px;background:#667a95"></div><div style="position:absolute;left:43px;top:27px;width:14px;height:1px;background:#667a95"></div><div class="th chk"><svg style="position:absolute;left:0;top:0" width="30" height="21"><defs><radialGradient id="tor"><stop offset="0.55" stop-color="#f7941e"/><stop offset="1" stop-color="#f7941e" stop-opacity="0"/></radialGradient></defs><ellipse cx="14.5" cy="10" rx="6.5" ry="6.5" fill="url(#tor)" opacity="0.6"/><circle cx="14.3" cy="9.6" r="3.8" fill="#f7921c"/></svg></div><div class="lt"><span>Layer 8</span></div></div><div class="lrow" style="top:147px;"><div class="eye"><svg style="position:absolute;left:8px;top:9.500px" width="13" height="9" viewBox="0 0 16 11"><path d="M0.5,5.5 Q8,-2.5 15.5,5.5 Q8,12.5 0.5,5.5 Z" fill="#cfcfcf"/><circle cx="8" cy="5.3" r="3.3" fill="#555"/><circle cx="8" cy="5.3" r="1.7" fill="#222"/><circle cx="9.2" cy="4" r="1" fill="#eee"/></svg></div><div class="th chk"></div><div class="lt"><span>Layer 2 copy</span></div></div><div class="lrow" style="top:177px;"><div class="eye"><svg style="position:absolute;left:8px;top:9.500px" width="13" height="9" viewBox="0 0 16 11"><path d="M0.5,5.5 Q8,-2.5 15.5,5.5 Q8,12.5 0.5,5.5 Z" fill="#cfcfcf"/><circle cx="8" cy="5.3" r="3.3" fill="#555"/><circle cx="8" cy="5.3" r="1.7" fill="#222"/><circle cx="9.2" cy="4" r="1" fill="#eee"/></svg></div><div class="th chk"><div style="position:absolute;left:13px;top:16px;width:9px;height:1px;background:#9aa"></div></div><div class="lt"><span>Layer 2</span></div></div><div class="lrow" style="top:207px;"><div class="eye"><svg style="position:absolute;left:8px;top:9.500px" width="13" height="9" viewBox="0 0 16 11"><path d="M0.5,5.5 Q8,-2.5 15.5,5.5 Q8,12.5 0.5,5.5 Z" fill="#cfcfcf"/><circle cx="8" cy="5.3" r="3.3" fill="#555"/><circle cx="8" cy="5.3" r="1.7" fill="#222"/><circle cx="9.2" cy="4" r="1" fill="#eee"/></svg></div><div class="th" style="background:linear-gradient(90deg,#74a9d8,#a9cae4 22%,#fff 52%,#fff 60%,#a9cde8 86%,#7bb3df)"></div><div class="lt"><span>Layer 0</span></div></div>
<div class="abs" style="left:0;top:641px;width:241px;height:19px;background:#535353;border-top:1px solid #5e5e5e;border-bottom:1px solid #333"></div>
<svg class="abs" style="left:36px;top:643px" width="205" height="18" viewBox="1161 702 205 18">
 <rect x="1163" y="708" width="8" height="5.500" rx="2.700" fill="none" stroke="#d8d8d8" stroke-width="1.500"/><rect x="1168" y="708" width="8" height="5.500" rx="2.700" fill="none" stroke="#d8d8d8" stroke-width="1.500"/>
 <text x="1189" y="716" font-family="Liberation Serif" font-style="italic" font-weight="bold" font-size="15" fill="#e0e0e0">fx</text><circle cx="1206" cy="716" r="1" fill="#e0e0e0"/>
 <rect x="1217" y="705.500" width="13" height="10" fill="#dcdcdc"/><circle cx="1223.500" cy="710.500" r="2.500" fill="#555"/>
 <circle cx="1249.500" cy="710.500" r="5.200" fill="#cfcfcf" stroke="#e6e6e6" stroke-width="1"/><path d="M1246,714 A5,5 0 0 1 1253,707 Z" fill="#6a6a6a"/><circle cx="1259.500" cy="716" r="1" fill="#e0e0e0"/>
 <path d="M1271,706 h5 l1.500,1.500 h6 v8.500 h-12.500 z" fill="#dcdcdc"/>
 <path d="M1299,705 h10 v11 h-5.500 l-4.500,-4.500 z" fill="#dcdcdc"/><path d="M1299,711 h5 v5 z" fill="#555"/>
 <path d="M1325.500,708 h9 l-0.800,8.500 h-7.400 z" fill="none" stroke="#dcdcdc" stroke-width="1.200"/><path d="M1324.500,706.500 h11 M1328,705 h4 M1328,709 v7 M1330,709 v7 M1332,709 v7" stroke="#dcdcdc" stroke-width="1.100"/>
 <g fill="#333"><rect x="1358" y="712" width="1.500" height="1.500"/><rect x="1355" y="715" width="1.500" height="1.500"/><rect x="1358" y="715" width="1.500" height="1.500"/><rect x="1352" y="718" width="1.500" height="1.500"/><rect x="1355" y="718" width="1.500" height="1.500"/><rect x="1358" y="718" width="1.500" height="1.500"/></g>
</svg>
</div>
</div></body></html>
